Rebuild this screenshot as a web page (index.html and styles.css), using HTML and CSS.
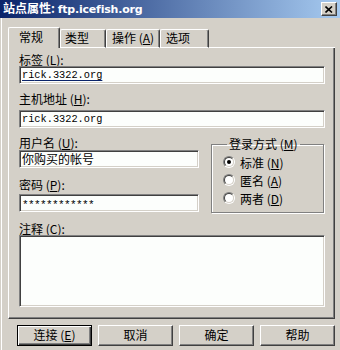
FILE: index.html
```html
<!DOCTYPE html>
<html>
<head>
<meta charset="utf-8">
<link rel="stylesheet" href="styles.css">
</head>
<body>
<div class="window">
  <div class="titlebar">
    <span class="title">站点属性: <span class="title-en">ftp.icefish.org</span></span>
    <span class="close"><svg width="8" height="7" viewBox="0 0 8 7"><path d="M0.5 0.5 L7 6.5 M7 0.5 L0.5 6.5" stroke="#000" stroke-width="1.6" fill="none"/></svg></span>
  </div>
  <div class="content">
    <div class="tabs">
      <div class="tab sel t1">常规</div>
      <div class="tab t2">类型</div>
      <div class="tab t3">操作 (<u>A</u>)</div>
      <div class="tab t4">选项</div>
      <div class="tabfill"></div>
    </div>
    <div class="panel">
      <div class="lbl l1">标签 (<u>L</u>):</div>
      <div class="field wide mono"><span class="ime">ri</span><span class="ime gap">ck.3322.org </span></div>
      <div class="lbl l2">主机地址 (<u>H</u>):</div>
      <div class="field wide mono">rick.3322.org</div>
      <div class="row">
        <div class="col">
          <div class="lbl l3">用户名 (<u>U</u>):</div>
          <div class="field narrow">你购买的帐号</div>
          <div class="lbl l4">密码 (<u>P</u>):</div>
          <div class="field narrow mono pw">************</div>
        </div>
        <fieldset class="group">
          <legend>登录方式 (<u>M</u>)</legend>
          <div class="radio"><span class="rb on"><span class="rb-in"><span class="dot"></span></span></span>标准 (<u>N</u>)</div>
          <div class="radio"><span class="rb"><span class="rb-in"></span></span>匿名 (<u>A</u>)</div>
          <div class="radio"><span class="rb"><span class="rb-in"></span></span>两者 (<u>D</u>)</div>
        </fieldset>
      </div>
      <div class="lbl l5">注释 (<u>C</u>):</div>
      <div class="field area"></div>
    </div>
    <div class="buttons">
      <div class="btn default">连接 (<u>E</u>)</div>
      <div class="btn">取消</div>
      <div class="btn">确定</div>
      <div class="btn">帮助</div>
    </div>
  </div>
</div>
</body>
</html>
```
FILE: styles.css
```css
* { box-sizing: border-box; }
html, body { margin: 0; padding: 0; }
body {
  width: 340px;
  height: 350px;
  overflow: hidden;
  background: #d4d0c8;
  font-family: "Noto Sans CJK SC", sans-serif;
  font-size: 12px;
  color: #000;
}
u { text-decoration-thickness: 1px; text-underline-offset: 1px; }
.window {
  width: 340px;
  height: 350px;
  background: #d4d0c8;
  display: flex;
  flex-direction: column;
}
.titlebar {
  height: 18px;
  flex: none;
  background: linear-gradient(to right, #0a246a, #a6caf0);
  display: flex;
  align-items: center;
  justify-content: space-between;
  padding: 0 3px 0 3px;
}
.title {
  color: #fff;
  font-weight: bold;
  font-size: 12px;
  line-height: 14px;
  white-space: nowrap;
}
.title-en { font-family: "DejaVu Sans", sans-serif; font-size: 11px; letter-spacing: -0.2px; }
.close {
  width: 16px;
  height: 14px;
  background: #d4d0c8;
  border: 1px solid;
  border-color: #fff #404040 #404040 #fff;
  box-shadow: inset -1px -1px #808080;
  display: flex;
  align-items: center;
  justify-content: center;
}
.close svg { display: block; }
.content {
  flex: 1;
  margin-left: 1px;
  border-left: 1px solid #fff;
  padding: 9px 5px 0 6px;
  display: flex;
  flex-direction: column;
}
.tabs {
  display: flex;
  align-items: flex-end;
  height: 21px;
}
.tab {
  height: 19px;
  border-top: 1px solid #fff;
  border-left: 1px solid #fff;
  border-right: 1px solid #404040;
  border-bottom: 1px solid #fff;
  box-shadow: inset -1px 0 #808080;
  border-radius: 2px 2px 0 0;
  line-height: 14px;
  padding-top: 1px;
  white-space: nowrap;
}
.tab.sel {
  height: 21px;
  border-bottom: none;
  padding-top: 2px;
}
.t1 { width: 52px; padding-left: 10px; }
.t2 { width: 46px; padding-left: 4px; }
.t3 { width: 54px; padding-left: 5px; }
.t4 { width: 49px; padding-left: 5px; }
.tabfill {
  flex: 1;
  height: 1px;
  background: #fff;
}
.panel {
  width: 327px;
  height: 271px;
  border-left: 1px solid #fff;
  border-right: 1px solid #404040;
  border-bottom: 1px solid #404040;
  box-shadow: inset -1px -1px #808080;
  padding: 0 0 0 10px;
  display: flex;
  flex-direction: column;
}
.lbl { line-height: 12px; height: 12px; white-space: nowrap; }
.l1 { margin-top: 6px; }
.l2 { margin-top: 9px; }
.l3 { margin-top: 9px; }
.l4 { margin-top: 11px; }
.l5 { margin-top: 10px; }
.field {
  height: 18px;
  background: #fcfefc;
  border: 1px solid;
  border-color: #808080 #fff #fff #808080;
  box-shadow: inset 1px 1px #404040, inset -1px -1px #d4d0c8;
  padding: 0 0 0 2px;
  line-height: 15px;
  white-space: nowrap;
  overflow: hidden;
}
.mono { font-family: "Liberation Mono", monospace; font-size: 10.3px; line-height: 16px; }
.ime { text-decoration: underline; text-decoration-color: #0a246a; text-underline-offset: 2px; }
.gap { padding-left: 0; }
.wide { width: 306px; }
.l2 + .field { margin-top: 5px; }
.narrow { width: 180px; }
.l3 + .field { margin-top: 1px; }
.l4 + .field { margin-top: 3px; }
.pw { font-size: 11px; letter-spacing: -0.6px; line-height: 20px; }
.row { display: flex; }
.col { display: flex; flex-direction: column; width: 192px; }
.group {
  margin: 10px 0 0 0;
  width: 113px;
  height: 75px;
  border: 1px solid #808080;
  box-shadow: inset 1px 1px #fff, 1px 1px #fff;
  padding: 3px 0 0 11px;
  min-width: 0;
}
.group legend {
  margin-left: 4px;
  padding: 0 2px;
  line-height: 12px;
  white-space: nowrap;
}
.radio {
  display: flex;
  align-items: center;
  height: 18px;
  white-space: nowrap;
}
.rb {
  width: 12px;
  height: 12px;
  border-radius: 50%;
  border: 1px solid;
  border-color: #808080 #fff #fff #808080;
  margin-right: 5px;
  flex: none;
}
.rb-in {
  display: flex;
  align-items: center;
  justify-content: center;
  width: 10px;
  height: 10px;
  border-radius: 50%;
  border: 1px solid;
  border-color: #404040 #d4d0c8 #d4d0c8 #404040;
  background: #fff;
}
.dot { width: 4px; height: 4px; border-radius: 50%; background: #000; }
.area { width: 306px; height: 72px; margin-top: 0; }
.buttons {
  display: flex;
  gap: 6px;
  padding-left: 9px;
  margin-top: 6px;
}
.btn {
  width: 75px;
  height: 21px;
  border: 1px solid;
  border-color: #fff #404040 #404040 #fff;
  box-shadow: inset -1px -1px #808080;
  text-align: center;
  line-height: 18px;
  white-space: nowrap;
}
.btn.default {
  border: 1px solid #000;
  box-shadow: inset 1px 1px #fff, inset -1px -1px #404040, inset -2px -2px #808080;
}
```
